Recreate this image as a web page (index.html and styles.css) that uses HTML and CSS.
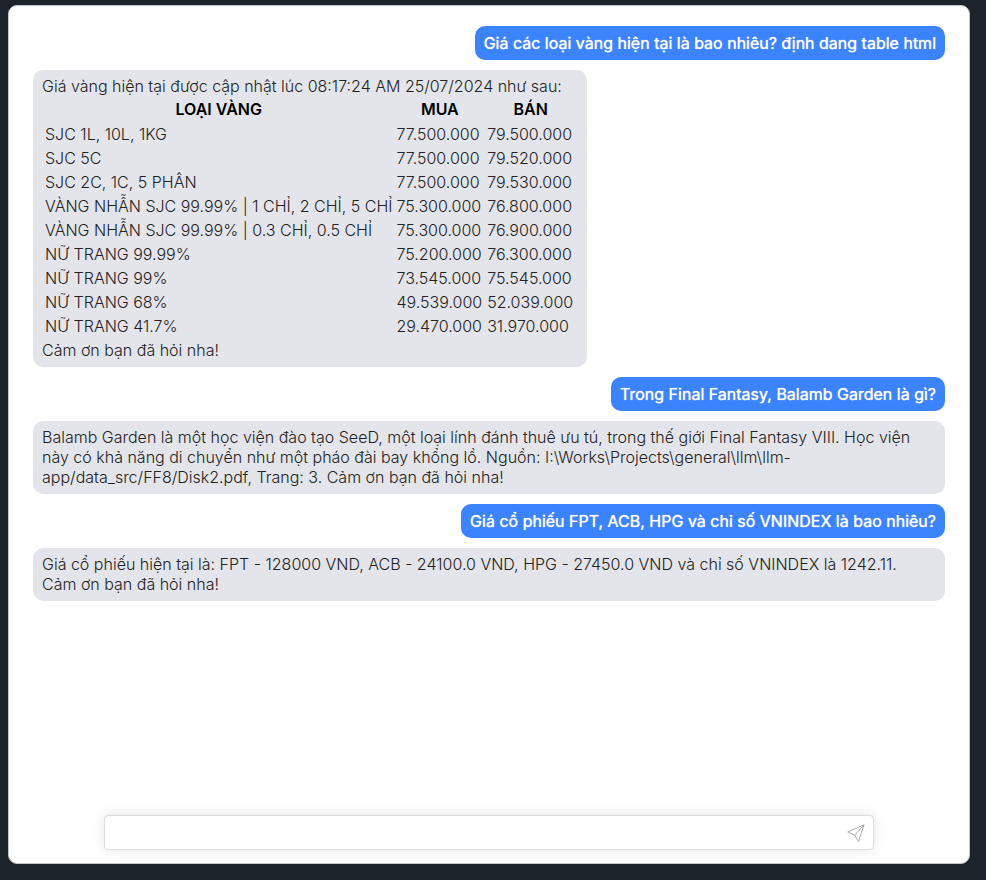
FILE: index.html
```html
<!DOCTYPE html>
<html lang="vi">
<head>
<meta charset="utf-8">
<title>Chat</title>
<link rel="stylesheet" href="styles.css">
</head>
<body>
<main class="chat">
  <div class="messages">
    <div class="bubble user">Giá các loại vàng hiện tại là bao nhiêu? định dang table html</div>
    <div class="bubble bot">
      Giá vàng hiện tại được cập nhật lúc 08:17:24 AM 25/07/2024 như sau:
      <table>
        <thead>
          <tr><th>LOẠI VÀNG</th><th>MUA</th><th>BÁN</th></tr>
        </thead>
        <tbody>
          <tr><td>SJC 1L, 10L, 1KG</td><td>77.500.000</td><td>79.500.000</td></tr>
          <tr><td>SJC 5C</td><td>77.500.000</td><td>79.520.000</td></tr>
          <tr><td>SJC 2C, 1C, 5 PHÂN</td><td>77.500.000</td><td>79.530.000</td></tr>
          <tr><td>VÀNG NHẪN SJC 99.99% | 1 CHỈ, 2 CHỈ, 5 CHỈ</td><td>75.300.000</td><td>76.800.000</td></tr>
          <tr><td>VÀNG NHẪN SJC 99.99% | 0.3 CHỈ, 0.5 CHỈ</td><td>75.300.000</td><td>76.900.000</td></tr>
          <tr><td>NỮ TRANG 99.99%</td><td>75.200.000</td><td>76.300.000</td></tr>
          <tr><td>NỮ TRANG 99%</td><td>73.545.000</td><td>75.545.000</td></tr>
          <tr><td>NỮ TRANG 68%</td><td>49.539.000</td><td>52.039.000</td></tr>
          <tr><td>NỮ TRANG 41.7%</td><td>29.470.000</td><td>31.970.000</td></tr>
        </tbody>
      </table>
      Cảm ơn bạn đã hỏi nha!
    </div>
    <div class="bubble user">Trong Final Fantasy, Balamb Garden là gì?</div>
    <div class="bubble bot">Balamb Garden là một học viện đào tạo SeeD, một loại lính đánh thuê ưu tú, trong thế giới Final Fantasy VIII. Học viện này có khả năng di chuyển như một pháo đài bay khổng lồ. Nguồn: I:\Works\Projects\general\llm\llm-app/data_src/FF8/Disk2.pdf, Trang: 3. Cảm ơn bạn đã hỏi nha!</div>
    <div class="bubble user">Giá cổ phiếu FPT, ACB, HPG và chỉ số VNINDEX là bao nhiêu?</div>
    <div class="bubble bot">Giá cổ phiếu hiện tại là: FPT - 128000 VND, ACB - 24100.0 VND, HPG - 27450.0 VND và chỉ số VNINDEX là 1242.11. Cảm ơn bạn đã hỏi nha!</div>
  </div>
  <form class="composer">
    <input type="text" class="field" aria-label="Message">
    <button type="button" class="send" aria-label="Send">
      <svg viewBox="0 0 18 18" width="18" height="18" fill="none" stroke="#aaa" stroke-linejoin="round"><path d="M17 .8.7 8 7.700 11.200 11.500 17.500zM17 .8 7.700 11.200"/></svg>
    </button>
  </form>
</main>
</body>
</html>
```
FILE: styles.css
```css
* { box-sizing: border-box; }
body {
  margin: 0;
  height: 100vh;
  padding: 5px 16px 16px 8px;
  background: #1d232a;
  color: #222;
  font: 300 16px/20px Inter, "Liberation Sans", sans-serif;
}
.chat {
  height: 100%;
  display: flex;
  flex-direction: column;
  padding: 20px 24px 13px;
  background: #fff;
  border: 1px solid #c4c6c8;
  border-radius: 9px;
}
.messages {
  flex: 1;
  display: flex;
  flex-direction: column;
  align-items: flex-start;
  gap: 10px;
}
.bubble { padding: 7px 9px; border-radius: 10px; }
.user {
  align-self: flex-end;
  background: #3c83ff;
  color: #fff;
  font-weight: 400;
  text-shadow: 0 0 1px #fff;
}
.bot { padding: 6px 10px 7px 9px; background: #e4e5ea; }
table { margin-bottom: 1px; border-spacing: 2px; }
th, td { padding: 1px; }
td + td { padding-right: 2px; }
th { padding-bottom: 2px; color: #000; font-weight: 600; text-align: center; }
.composer {
  position: relative;
  padding: 0 71px;
  display: flex;
}
.field {
  flex: 1;
  height: 35px;
  padding: 0 44px 0 12px;
  border: 1px solid #ddd;
  border-radius: 4px;
  box-shadow: 0 0 14px rgba(0, 0, 0, 0.1);
  font: inherit;
}
.send {
  position: absolute;
  right: 80px;
  top: 9px;
  padding: 0;
  border: 0;
  background: none;
  display: flex;
}
```
